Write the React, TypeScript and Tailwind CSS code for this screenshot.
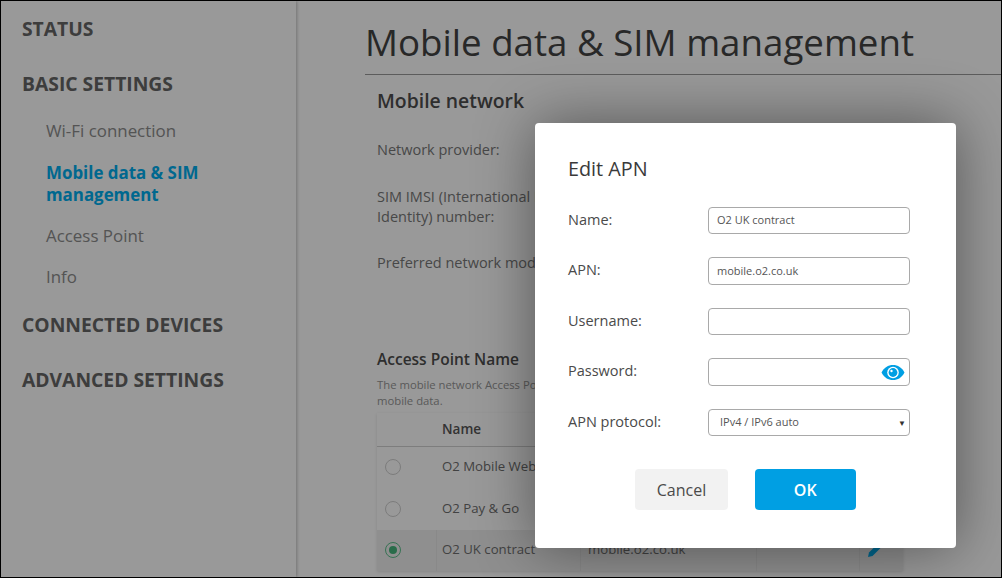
import React from 'react';

const font = { fontFamily: '"Open Sans", sans-serif' };

const apnRows = [
  { name: 'O2 Mobile Web', apn: 'mobile.o2.co.uk', selected: false },
  { name: 'O2 Pay & Go', apn: 'payandgo.o2.co.uk', selected: false },
  { name: 'O2 UK contract', apn: 'mobile.o2.co.uk', selected: true },
];

function Sidebar() {
  return (
    <aside className="w-[295px] shrink-0 h-full pl-[21px] shadow-[1px_0_3px_rgba(0,0,0,0.25)] relative text-[#666666]">
      <div className="pt-[13.500px] text-[19.300px] leading-[27px] font-bold">STATUS</div>
      <div className="mt-[28px] text-[19.300px] leading-[27px] font-bold">BASIC SETTINGS</div>
      <div className="pl-[24px] mr-[40px] text-[16.900px] text-[#8c8c8c]">
        <div className="mt-[22px] leading-[24px]">Wi-Fi connection</div>
        <div className="mt-[19px] leading-[22.500px] font-bold text-[#00aeef] w-[200px]">Mobile data &amp; SIM management</div>
        <div className="mt-[17.500px] leading-[24px]">Access Point</div>
        <div className="mt-[17px] leading-[24px]">Info</div>
      </div>
      <div className="mt-[22px] text-[19.300px] leading-[27px] font-bold">CONNECTED DEVICES</div>
      <div className="mt-[28px] text-[19.300px] leading-[27px] font-bold">ADVANCED SETTINGS</div>
    </aside>
  );
}

function Radio({ on }: { on: boolean }) {
  return (
    <div className={`w-[16px] h-[16px] rounded-full border-[1.5px] flex items-center justify-center ${on ? 'border-[#5cc08c]' : 'border-[#cfcfcf]'}`}>
      {on && <div className="w-[8px] h-[8px] rounded-full bg-[#45b57c]" />}
    </div>
  );
}

function MainContent() {
  const cols = 'grid grid-cols-[59px_144px_176px_103px_44px]';
  return (
    <main className="flex-1 min-w-0 pl-[69px]">
      <h1 className="pt-[17px] text-[36.700px] leading-[49px] font-medium whitespace-nowrap text-[#444444] border-b border-[#999999] pb-[7px]">
        Mobile data &amp; SIM management
      </h1>
      <div className="pl-[12px]">
        <h2 className="mt-[13px] text-[19.400px] leading-[26px] font-semibold text-[#4e4e4e]">Mobile network</h2>
        <div className="mt-[26px] text-[14.500px] leading-[20px] text-[#787878]">Network provider:</div>
        <div className="mt-[27px] text-[14.500px] leading-[20px] text-[#787878] w-[300px]">
          SIM IMSI (International Mobile Subscriber
          <br />
          Identity) number:
        </div>
        <div className="mt-[26px] text-[14.500px] leading-[20px] text-[#787878]">Preferred network mode:</div>
        <h3 className="mt-[75px] text-[15.500px] leading-[22px] font-semibold text-[#4e4e4e]">Access Point Name</h3>
        <p className="mt-[7px] text-[11.300px] leading-[16px] text-[#969696] whitespace-nowrap">
          The mobile network Access Point Name (APN) is needed to connect to the internet using
          <br />
          mobile data.
        </p>
        <div className="mt-[3.500px] w-[526px] shadow-[0_1px_3px_rgba(0,0,0,0.12)]">
          <div className={`${cols} h-[34px] items-center border-b border-[#d0d0d0] text-[13.500px] font-semibold text-[#555555]`}>
            <div />
            <div className="pl-[6px]">Name</div>
            <div className="pl-[8px]">APN</div>
            <div />
            <div />
          </div>
          {apnRows.map((row) => {
            const cell = `h-full flex items-center ${row.selected ? 'shadow-[inset_1px_0_0_#e4e4e4]' : ''}`;
            return (
              <div
                key={row.name}
                className={`${cols} h-[41.500px] items-center text-[13.200px] text-[#6e6e6e] ${row.selected ? 'bg-[#eeeeee]' : ''}`}
              >
                <div className="pl-[8px]">
                  <Radio on={row.selected} />
                </div>
                <div className={`${cell} pl-[6px] whitespace-nowrap`}>{row.name}</div>
                <div className={`${cell} pl-[8px] whitespace-nowrap`}>{row.apn}</div>
                <div className={cell} />
                <div className={`${cell} pl-[8px]`}>
                  <svg width="16" height="16" viewBox="0 0 16 16" fill="#00aeef">
                    <path d="M1 15l1-4.500L11 1.500a1.500 1.500 0 0 1 2.100 0l1.400 1.400a1.500 1.500 0 0 1 0 2.100L5.500 14z" />
                  </svg>
                </div>
              </div>
            );
          })}
        </div>
      </div>
    </main>
  );
}

function Field({ label, children }: { label: string; children: React.ReactNode }) {
  return (
    <div className="grid grid-cols-[140px_202px] items-center h-[28px]">
      <label className="text-[14.500px] leading-[20px] -mt-[2px] text-[#4a4a4a]">{label}</label>
      {children}
    </div>
  );
}

function EyeIcon() {
  return (
    <svg width="24" height="17" viewBox="0 0 24 17">
      <path d="M0.500 8.500C3 3.500 7.200 1 12 1s9 2.500 11.500 7.500C21 13.500 16.800 16 12 16S3 13.500 0.500 8.500z" fill="#009fe3" />
      <circle cx="12" cy="8.500" r="5.800" fill="#ffffff" />
      <circle cx="12" cy="8.500" r="4.400" fill="#009fe3" />
      <circle cx="10.500" cy="7" r="1.200" fill="#ffffff" />
    </svg>
  );
}

function EditDialog() {
  const inputCls = 'h-[27.500px] w-[202px] rounded-[4px] border border-[#a9a9a9] bg-white px-[8px] text-[11px] text-[#555555] flex items-center';
  return (
    <div className="absolute left-[534px] top-[122px] w-[420.500px] h-[425px] bg-white rounded-[4px] shadow-[0_0_60px_rgba(0,0,0,0.45)] pl-[33px] pt-[32px]">
      <div className="text-[19.800px] leading-[28px] font-medium text-[#3a3a3a]">Edit APN</div>
      <div className="mt-[23.500px] flex flex-col gap-[22.500px]">
        <Field label="Name:">
          <div className={inputCls}>O2 UK contract</div>
        </Field>
        <Field label="APN:">
          <div className={inputCls}>mobile.o2.co.uk</div>
        </Field>
        <Field label="Username:">
          <div className={inputCls} />
        </Field>
        <Field label="Password:">
          <div className={`${inputCls} justify-end pr-[4px]`}>
            <EyeIcon />
          </div>
        </Field>
        <Field label="APN protocol:">
          <div className={`${inputCls} justify-between pl-[11px] pr-[3px]`}>
            <span>IPv4 / IPv6 auto</span>
            <span className="text-[8px] text-[#333333]">▼</span>
          </div>
        </Field>
      </div>
      <div className="mt-[32.500px] ml-[67px] flex gap-[27px]">
        <button className="w-[93px] h-[41px] rounded-[4px] bg-[#f2f2f2] text-[16px] text-[#4a4a4a]">Cancel</button>
        <button className="w-[100.500px] h-[41px] rounded-[4px] bg-[#009fe3] text-[16px] font-semibold text-white">OK</button>
      </div>
    </div>
  );
}

export default function App() {
  return (
    <div className="relative w-[1002px] h-[578px] overflow-hidden border border-black bg-white" style={font}>
      <div className="flex h-full">
        <Sidebar />
        <MainContent />
      </div>
      <div className="absolute inset-0 bg-black/40" />
      <EditDialog />
    </div>
  );
}
